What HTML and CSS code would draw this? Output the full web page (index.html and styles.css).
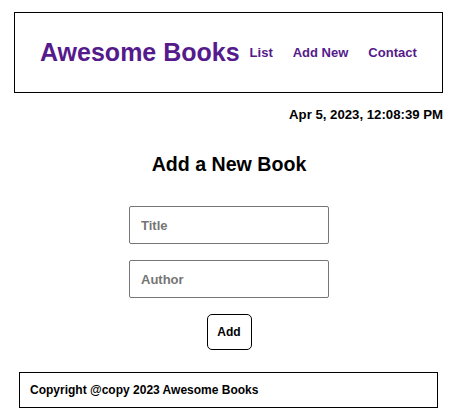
FILE: index.html
```html
<!DOCTYPE html>
<html lang="en">
<head>
<meta charset="utf-8">
<title>Awesome Books</title>
<link rel="stylesheet" href="styles.css">
</head>
<body>
<header class="site-header">
  <a class="logo" href="#">Awesome Books</a>
  <nav class="nav">
    <a class="nav-link" href="#">List</a>
    <a class="nav-link" href="#">Add New</a>
    <a class="nav-link" href="#">Contact</a>
  </nav>
</header>
<p class="date">Apr 5, 2023, 12:08:39 PM</p>
<main class="add-section">
  <h2 class="section-title">Add a New Book</h2>
  <form class="book-form">
    <input class="field" type="text" placeholder="Title">
    <input class="field" type="text" placeholder="Author">
    <button class="add-btn" type="button">Add</button>
  </form>
</main>
<footer class="site-footer">Copyright @copy 2023 Awesome Books</footer>
</body>
</html>
```
FILE: styles.css
```css
* { box-sizing: border-box; }
body {
  margin: 0;
  font-family: "Liberation Sans", Arial, sans-serif;
  color: #000;
  background: #fff;
}
.site-header {
  margin: 12px 15px 0 14px;
  height: 81px;
  border: 1px solid #000;
  display: flex;
  align-items: center;
  padding-left: 25px;
}
.logo {
  font-size: 25px;
  font-weight: bold;
  color: #551a8b;
  text-decoration: none;
}
.nav { display: flex; }
.nav-link {
  padding: 0 10px;
  font-size: 13px;
  font-weight: bold;
  color: #551a8b;
  text-decoration: none;
}
.date {
  margin: 14px 15px 0 0;
  text-align: right;
  font-size: 13.2px;
  line-height: 15px;
  font-weight: bold;
}
.add-section {
  display: flex;
  flex-direction: column;
  align-items: center;
}
.section-title {
  margin: 31px 0 0;
  font-size: 19.6px;
  line-height: 22px;
  font-weight: bold;
}
.book-form {
  margin-top: 31px;
  display: flex;
  flex-direction: column;
  align-items: center;
  gap: 16px;
}
.field {
  width: 200px;
  height: 38px;
  border: 1px solid #767676;
  border-radius: 2px;
  padding: 0 11px;
  font-family: inherit;
  font-size: 13px;
  font-weight: bold;
  outline: none;
}
.field::placeholder { color: #757575; }
.add-btn {
  width: 45px;
  height: 36px;
  border: 1px solid #000;
  border-radius: 5px;
  background: #fff;
  font-family: inherit;
  font-size: 12px;
  font-weight: bold;
  color: #000;
  padding: 0;
}
.site-footer {
  margin: 22px 20px 0 19px;
  height: 36px;
  border: 1px solid #000;
  display: flex;
  align-items: center;
  padding-left: 10px;
  font-size: 12px;
  font-weight: bold;
}
```
